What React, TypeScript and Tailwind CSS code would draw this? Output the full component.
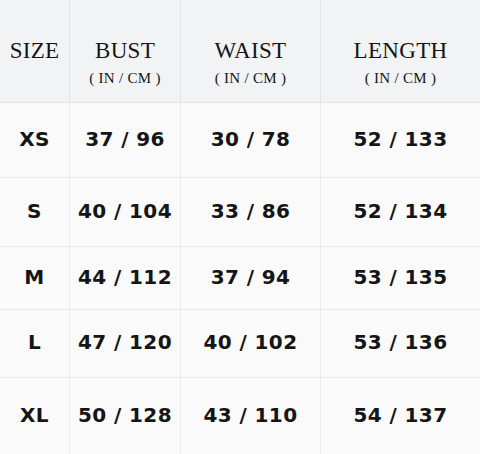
const headers = [
  { title: 'SIZE', sub: '' },
  { title: 'BUST', sub: '( IN / CM )' },
  { title: 'WAIST', sub: '( IN / CM )' },
  { title: 'LENGTH', sub: '( IN / CM )' },
]

const rows = [
  ['XS', '37 / 96', '30 / 78', '52 / 133'],
  ['S', '40 / 104', '33 / 86', '52 / 134'],
  ['M', '44 / 112', '37 / 94', '53 / 135'],
  ['L', '47 / 120', '40 / 102', '53 / 136'],
  ['XL', '50 / 128', '43 / 110', '54 / 137'],
]

const rowHeights = ['h-[75px]', 'h-[69px]', 'h-[63px]', 'h-[68px]', 'h-[76px]']
const colWidths = ['w-[70px]', 'w-[111px]', 'w-[140px]', 'w-[159px]']

export default function App() {
  return (
    <div className="w-[480px] h-[454px] bg-[#fafafa] text-[#151515] overflow-hidden">
      <div className="flex h-[103px] bg-[#f2f3f5] border-b border-[#e4e4e6]">
        {headers.map((h, i) => (
          <div
            key={h.title}
            className={`${colWidths[i]} flex flex-col items-center pt-[38px] ${i < 3 ? 'border-r border-[#e4e4e6]' : ''}`}
            style={{ fontFamily: '"Liberation Serif", serif' }}
          >
            <div className="text-[23px] leading-[26px] tracking-[0.3px]">{h.title}</div>
            {h.sub && <div className="text-[15px] leading-[18px] mt-[5px] tracking-[0.3px]">{h.sub}</div>}
          </div>
        ))}
      </div>
      {rows.map((r, ri) => (
        <div
          key={r[0]}
          className={`flex ${rowHeights[ri]} ${ri < rows.length - 1 ? 'border-b border-[#e8e8e8]' : ''}`}
        >
          {r.map((c, ci) => (
            <div
              key={ci}
              className={`${colWidths[ci]} flex items-center justify-center pb-[3px] text-[20px] font-bold tracking-[0.4px] ${ci < 3 ? 'border-r border-[#ebebeb]' : ''}`}
              style={{ fontFamily: '"DejaVu Sans", sans-serif' }}
            >
              {c}
            </div>
          ))}
        </div>
      ))}
    </div>
  )
}
